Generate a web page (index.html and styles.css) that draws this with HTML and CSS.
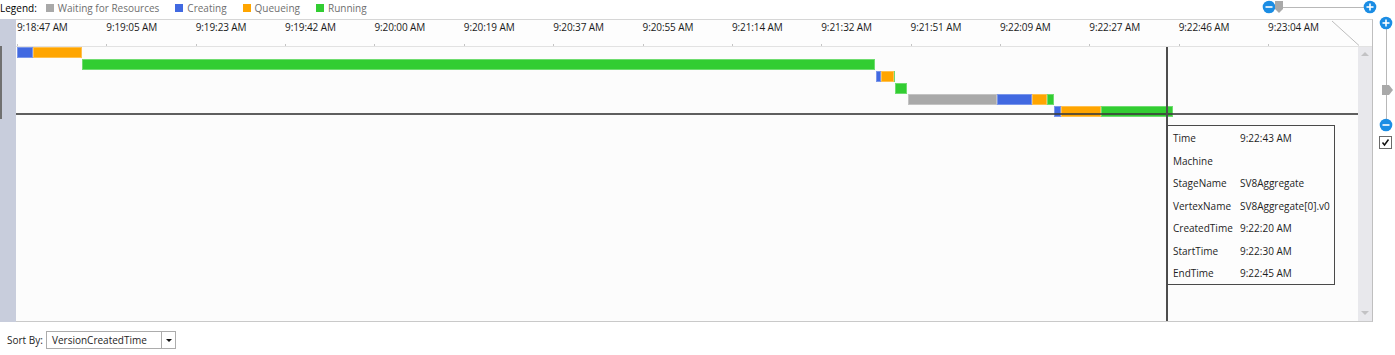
FILE: index.html
```html
<!DOCTYPE html>
<html>
<head>
<meta charset="utf-8">
<link rel="stylesheet" href="styles.css">
</head>
<body>
<div class="page">
  <div class="topbar">
    <div class="legend">
      <span class="legend-title">Legend:</span>
      <span class="legend-item"><i class="sw wait"></i>Waiting for Resources</span>
      <span class="legend-item"><i class="sw creating"></i>Creating</span>
      <span class="legend-item"><i class="sw queue"></i>Queueing</span>
      <span class="legend-item"><i class="sw running"></i>Running</span>
    </div>
    <svg class="hslider" width="118" height="14" viewBox="0 0 118 14">
      <line x1="23" y1="7.5" x2="104" y2="7.5" stroke="#b8b8b8" stroke-width="1"/>
      <circle cx="9" cy="7" r="6.3" fill="#1b8de4"/>
      <line x1="5.5" y1="7" x2="12.5" y2="7" stroke="#fff" stroke-width="1.6"/>
      <polygon points="15,1 23,1 23,9 19,13 15,9" fill="#a9a9a9"/>
      <circle cx="110" cy="7" r="6.3" fill="#1b8de4"/>
      <line x1="106.5" y1="7" x2="113.5" y2="7" stroke="#fff" stroke-width="1.6"/>
      <line x1="110" y1="3.5" x2="110" y2="10.5" stroke="#fff" stroke-width="1.6"/>
    </svg>
  </div>

  <div class="main">
    <div class="chart">
      <div class="side"><div class="side-thumb"></div></div>
      <div class="plot">
        <div class="axis">
          <div class="ticks">
            <div class="tick"><span>9:18:47 AM</span><i></i></div>
            <div class="tick"><span>9:19:05 AM</span><i></i></div>
            <div class="tick"><span>9:19:23 AM</span><i></i></div>
            <div class="tick"><span>9:19:42 AM</span><i></i></div>
            <div class="tick"><span>9:20:00 AM</span><i></i></div>
            <div class="tick"><span>9:20:19 AM</span><i></i></div>
            <div class="tick"><span>9:20:37 AM</span><i></i></div>
            <div class="tick"><span>9:20:55 AM</span><i></i></div>
            <div class="tick"><span>9:21:14 AM</span><i></i></div>
            <div class="tick"><span>9:21:32 AM</span><i></i></div>
            <div class="tick"><span>9:21:51 AM</span><i></i></div>
            <div class="tick"><span>9:22:09 AM</span><i></i></div>
            <div class="tick"><span>9:22:27 AM</span><i></i></div>
            <div class="tick"><span>9:22:46 AM</span><i></i></div>
            <div class="tick last"><span>9:23:04 AM</span><i></i></div>
          </div>
          <svg class="corner" width="41" height="26" viewBox="0 0 41 26">
            <line x1="1" y1="1" x2="28" y2="25.5" stroke="#bdbdbd" stroke-width="1"/>
          </svg>
        </div>
        <div class="body">
          <div class="rows">
            <div class="row">
              <div class="bar creating" style="margin-left:1px;width:16px"></div>
              <div class="bar queue" style="width:49px"></div>
            </div>
            <div class="row">
              <div class="bar running" style="margin-left:66px;width:793px"></div>
            </div>
            <div class="row">
              <div class="bar creating" style="margin-left:860px;width:5px"></div>
              <div class="bar queue" style="width:13px"></div>
              <div class="bar running" style="width:1px"></div>
            </div>
            <div class="row">
              <div class="bar running" style="margin-left:879px;width:12px"></div>
            </div>
            <div class="row">
              <div class="bar wait" style="margin-left:892px;width:89px"></div>
              <div class="bar creating" style="width:35px"></div>
              <div class="bar queue" style="width:15px"></div>
              <div class="bar running" style="width:7px"></div>
            </div>
            <div class="row">
              <div class="bar creating" style="margin-left:1038px;width:7px"></div>
              <div class="bar queue" style="width:40px"></div>
              <div class="bar running" style="width:72px"></div>
            </div>
            <div class="hline"></div>
            <div class="vline"></div>
            <div class="tooltip">
              <div class="tt-row"><span class="tt-key">Time</span><span>9:22:43 AM</span></div>
              <div class="tt-row"><span class="tt-key">Machine</span><span></span></div>
              <div class="tt-row"><span class="tt-key">StageName</span><span>SV8Aggregate</span></div>
              <div class="tt-row"><span class="tt-key">VertexName</span><span>SV8Aggregate[0].v0</span></div>
              <div class="tt-row"><span class="tt-key">CreatedTime</span><span>9:22:20 AM</span></div>
              <div class="tt-row"><span class="tt-key">StartTime</span><span>9:22:30 AM</span></div>
              <div class="tt-row"><span class="tt-key">EndTime</span><span>9:22:45 AM</span></div>
            </div>
          </div>
          <div class="vscroll">
            <i class="arrow-up"></i>
            <i class="arrow-down"></i>
          </div>
        </div>
      </div>
    </div>
    <div class="rightcol">
      <svg class="vslider" width="16" height="116" viewBox="0 0 16 116">
        <line x1="8.5" y1="13" x2="8.5" y2="103" stroke="#b8b8b8" stroke-width="1"/>
        <circle cx="8" cy="7" r="6.3" fill="#1b8de4"/>
        <line x1="4.5" y1="7" x2="11.5" y2="7" stroke="#fff" stroke-width="1.6"/>
        <line x1="8" y1="3.5" x2="8" y2="10.5" stroke="#fff" stroke-width="1.6"/>
        <polygon points="4,69 11,69 15,74 11,79 4,79" fill="#a9a9a9"/>
        <circle cx="8" cy="109" r="6.3" fill="#1b8de4"/>
        <line x1="4.5" y1="109" x2="11.5" y2="109" stroke="#fff" stroke-width="1.6"/>
      </svg>
      <div class="checkbox">
        <svg width="11" height="11" viewBox="0 0 11 11">
          <polyline points="2.5,5.5 4.5,8 8.5,2.5" fill="none" stroke="#111" stroke-width="1.5"/>
        </svg>
      </div>
    </div>
  </div>

  <div class="sortbar">
    <span class="sort-label">Sort By:</span>
    <div class="combo">
      <span class="combo-text">VersionCreatedTime</span>
      <span class="combo-btn"><i class="combo-arrow"></i></span>
    </div>
  </div>
</div>
</body>
</html>
```

FILE: styles.css
```css
* { box-sizing: border-box; }

html, body {
  margin: 0;
  padding: 0;
  background: #ffffff;
}

body {
  font-family: "Open Sans", "Noto Sans", sans-serif;
  font-size: 10px;
  color: #1e1e1e;
}

.page {
  width: 1395px;
  height: 355px;
  display: flex;
  flex-direction: column;
  overflow: hidden;
}

/* ---------- top bar ---------- */
.topbar {
  height: 19px;
  display: flex;
  justify-content: space-between;
  align-items: flex-start;
  padding-right: 17px;
}

.legend {
  display: flex;
  align-items: center;
  height: 16px;
  line-height: 16px;
  gap: 16px;
}

.legend-title {
  color: #000;
  margin-right: -7px;
}

.legend-item {
  display: flex;
  align-items: center;
  color: #6f6f6f;
}

.sw {
  display: block;
  width: 8px;
  height: 8px;
  margin-right: 4px;
}

.wait { background: #a9a9a9; }
.creating { background: #4169e1; }
.queue { background: #ffa500; }
.running { background: #32cd32; }

.hslider { display: block; }

/* ---------- main ---------- */
.main {
  height: 303px;
  display: flex;
}

.chart {
  width: 1373px;
  display: flex;
}

.side {
  width: 16px;
  background: #c8cddc;
}

.side-thumb {
  width: 2px;
  height: 73px;
  margin-top: 27px;
  background: #707070;
}

.plot {
  flex: 1;
  display: flex;
  flex-direction: column;
  border-top: 1px solid #d6d6d6;
  border-right: 1px solid #bfbfbf;
  border-bottom: 1px solid #c9c9c9;
  background: #fcfcfc;
}

.axis {
  height: 27px;
  display: flex;
  border-bottom: 1px solid #e2e2e2;
  background: #fdfdfd;
}

.ticks {
  flex: 1;
  display: flex;
  padding-left: 1px;
}

.tick {
  width: 89.36px;
  flex: none;
  display: flex;
  flex-direction: column;
  align-items: flex-start;
}

.tick.last {
  flex: 1;
  width: auto;
}

.tick span {
  line-height: 14px;
  letter-spacing: -0.1px;
  white-space: nowrap;
  color: #1a1a1a;
}

.tick i {
  display: block;
  width: 1px;
  height: 2px;
  margin-top: auto;
  background: #c4c4c4;
}

.corner {
  display: block;
  flex: none;
}

.body {
  flex: 1;
  display: flex;
}

.rows {
  flex: 1;
  position: relative;
}

.row {
  height: 11.85px;
  display: flex;
  align-items: flex-start;
}

.bar {
  height: 11px;
  flex: none;
  box-shadow: inset 0 0 0 1px rgba(255, 255, 255, 0.3);
}

.hline {
  position: absolute;
  left: 0;
  right: 0;
  top: 66px;
  height: 2px;
  background: rgba(60, 60, 60, 0.82);
}

.vline {
  position: absolute;
  top: 0;
  bottom: 0;
  left: 1150px;
  width: 2px;
  background: #4d4d4d;
}

.tooltip {
  position: absolute;
  left: 1151px;
  top: 78px;
  width: 168px;
  height: 160px;
  border: 1px solid #4a4a4a;
  background: #fdfdfd;
  padding: 1px 0 0 5px;
}

.tt-row {
  display: flex;
  height: 22.5px;
  line-height: 22.5px;
  white-space: nowrap;
  color: #1e1e1e;
}

.tt-key {
  width: 67px;
  flex: none;
}

.vscroll {
  width: 14px;
  flex: none;
  background: #e8e8ec;
  display: flex;
  flex-direction: column;
  align-items: center;
  justify-content: space-between;
  padding: 5px 0 6px;
}

.arrow-up {
  display: block;
  width: 0;
  height: 0;
  border-left: 4px solid transparent;
  border-right: 4px solid transparent;
  border-bottom: 4px solid #c2c2c4;
}

.arrow-down {
  display: block;
  width: 0;
  height: 0;
  border-left: 4px solid transparent;
  border-right: 4px solid transparent;
  border-top: 4px solid #c2c2c4;
}

/* ---------- right column ---------- */
.rightcol {
  flex: 1;
  display: flex;
  flex-direction: column;
  padding-left: 5px;
}

.vslider {
  display: block;
  margin-top: -3px;
}

.checkbox {
  width: 13px;
  height: 13px;
  margin-top: 4px;
  margin-left: 1px;
  border: 1px solid #6a6a6a;
  background: #fff;
  display: flex;
  align-items: center;
  justify-content: center;
}

.checkbox svg { display: block; }

/* ---------- sort bar ---------- */
.sortbar {
  display: flex;
  align-items: center;
  padding: 9px 0 0 7px;
}

.sort-label {
  width: 39px;
  color: #1e1e1e;
  white-space: nowrap;
}

.combo {
  width: 130px;
  height: 18px;
  border: 1px solid #acacac;
  background: #fff;
  display: flex;
  align-items: center;
}

.combo-text {
  flex: 1;
  padding-left: 5px;
  color: #1e1e1e;
  white-space: nowrap;
}

.combo-btn {
  width: 14px;
  height: 100%;
  border-left: 1px solid #acacac;
  display: flex;
  align-items: center;
  justify-content: center;
}

.combo-arrow {
  display: block;
  width: 0;
  height: 0;
  border-left: 3px solid transparent;
  border-right: 3px solid transparent;
  border-top: 3px solid #111;
}
```
